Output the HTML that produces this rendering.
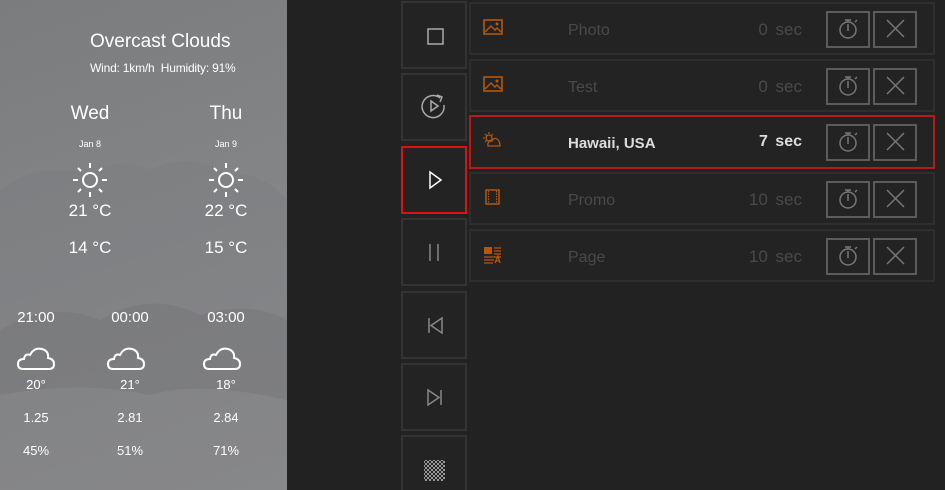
<!DOCTYPE html>
<html><head><style>
*{margin:0;padding:0;box-sizing:border-box}
html,body{width:945px;height:490px;overflow:hidden}
body{background:#222;position:relative;font-family:"Liberation Sans",sans-serif}
.left{position:absolute;left:0;top:0;width:287px;height:490px;background:linear-gradient(160deg,#7a7c7e 0%,#838587 50%,#8e8f90 100%);color:#fff}
.t{position:absolute;text-align:center;white-space:nowrap}
.btn{position:absolute;left:401px;width:66px;height:68px;border:2px solid #333;background:#232323}
.row{position:absolute;left:469px;width:466px;height:53px;border:2px solid #2e2e2e;background:#232323}
.row .name{position:absolute;left:97px;top:18px;font-size:16px;color:#4a4a4a}
.row .sec{position:absolute;right:131px;top:16px;font-size:17px;color:#4a4a4a;word-spacing:3px}
.sb{position:absolute;top:7px;width:44px;height:37px;border:2px solid #5c5c5c}
.ic{position:absolute;left:12px;top:15px}
</style></head><body>
<div class="left">
<svg width="287" height="490" style="position:absolute;left:0;top:0" viewBox="0 0 287 490">
<path d="M0 190 Q40 160 90 175 Q120 155 150 170 Q190 150 230 175 Q260 170 287 200 L287 490 L0 490Z" fill="#7a7c7e" opacity=".35"/>
<path d="M0 330 Q50 300 100 320 Q150 290 200 315 Q250 300 287 320 L287 400 Q200 380 150 395 Q80 380 0 395Z" fill="#6f7173" opacity=".35"/>
</svg>
<div class="t" style="left:90px;top:31px;font-size:19px">Overcast Clouds</div>
<div class="t" style="left:90px;top:61px;font-size:12px;letter-spacing:-0.2px">Wind: 1km/h&nbsp;&nbsp;Humidity: 91%</div>
<div class="t" style="left:60px;width:60px;top:103px;font-size:19px">Wed</div>
<div class="t" style="left:196px;width:60px;top:103px;font-size:19px">Thu</div>
<div class="t" style="left:60px;width:60px;top:139px;font-size:9px">Jan 8</div>
<div class="t" style="left:196px;width:60px;top:139px;font-size:9px">Jan 9</div>
<svg style="position:absolute;left:72px;top:162px" width="36" height="36" viewBox="0 0 36 36" stroke="#fff" stroke-width="2" fill="none"><circle cx="18" cy="18" r="7"/><path d="M18 1v5M18 30v5M1 18h5M30 18h5M6 6l3 3M27 27l3 3M30 6l-3 3M6 30l3-3"/></svg>
<svg style="position:absolute;left:208px;top:162px" width="36" height="36" viewBox="0 0 36 36" stroke="#fff" stroke-width="2" fill="none"><circle cx="18" cy="18" r="7"/><path d="M18 1v5M18 30v5M1 18h5M30 18h5M6 6l3 3M27 27l3 3M30 6l-3 3M6 30l3-3"/></svg>
<div class="t" style="left:55px;width:70px;top:201px;font-size:17px">21 °C</div>
<div class="t" style="left:191px;width:70px;top:201px;font-size:17px">22 °C</div>
<div class="t" style="left:55px;width:70px;top:238px;font-size:17px">14 °C</div>
<div class="t" style="left:191px;width:70px;top:238px;font-size:17px">15 °C</div>
<div class="t" style="left:6px;width:60px;top:309px;font-size:15px">21:00</div>
<div class="t" style="left:100px;width:60px;top:309px;font-size:15px">00:00</div>
<div class="t" style="left:196px;width:60px;top:309px;font-size:15px">03:00</div>
<svg style="position:absolute;left:17px;top:345px" width="38" height="26" viewBox="0 0 38 26"><path d="M6 24 Q1 24 1 19 Q1 14 7 14 Q8 8 13 10 Q17 2 25 4 Q32 6 31 13 Q37 14 37 19 Q37 24 32 24Z" fill="none" stroke="#fff" stroke-width="2"/></svg>
<svg style="position:absolute;left:107px;top:345px" width="38" height="26" viewBox="0 0 38 26"><path d="M6 24 Q1 24 1 19 Q1 14 7 14 Q8 8 13 10 Q17 2 25 4 Q32 6 31 13 Q37 14 37 19 Q37 24 32 24Z" fill="none" stroke="#fff" stroke-width="2"/></svg>
<svg style="position:absolute;left:203px;top:345px" width="38" height="26" viewBox="0 0 38 26"><path d="M6 24 Q1 24 1 19 Q1 14 7 14 Q8 8 13 10 Q17 2 25 4 Q32 6 31 13 Q37 14 37 19 Q37 24 32 24Z" fill="none" stroke="#fff" stroke-width="2"/></svg>
<div class="t" style="left:6px;width:60px;top:377px;font-size:13px">20°</div>
<div class="t" style="left:100px;width:60px;top:377px;font-size:13px">21°</div>
<div class="t" style="left:196px;width:60px;top:377px;font-size:13px">18°</div>
<div class="t" style="left:6px;width:60px;top:410px;font-size:13px">1.25</div>
<div class="t" style="left:100px;width:60px;top:410px;font-size:13px">2.81</div>
<div class="t" style="left:196px;width:60px;top:410px;font-size:13px">2.84</div>
<div class="t" style="left:6px;width:60px;top:443px;font-size:13px">45%</div>
<div class="t" style="left:100px;width:60px;top:443px;font-size:13px">51%</div>
<div class="t" style="left:196px;width:60px;top:443px;font-size:13px">71%</div>
</div>

<div class="btn" style="top:1px"><svg width="62" height="64" viewBox="0 0 62 64"><rect x="25" y="26" width="15" height="15" fill="none" stroke="#aaa" stroke-width="1.5"/></svg></div>
<div class="btn" style="top:73px"><svg width="62" height="64" viewBox="0 0 62 64"><path d="M41 30 A11 11 0 1 1 37 23" fill="none" stroke="#aaa" stroke-width="1.5"/><path d="M34 20 L39 22 L37 27" fill="none" stroke="#aaa" stroke-width="1.5"/><path d="M28 26 L35 31 L28 36Z" fill="none" stroke="#aaa" stroke-width="1.5"/></svg></div>
<div class="btn" style="top:146px;border-color:#d11"><svg width="62" height="64" viewBox="0 0 62 64"><path d="M27 24 L38 32 L27 40Z" fill="none" stroke="#fff" stroke-width="1.5"/></svg></div>
<div class="btn" style="top:218px"><svg width="62" height="64" viewBox="0 0 62 64"><path d="M27 24v17M35 24v17" stroke="#888" stroke-width="1.5"/></svg></div>
<div class="btn" style="top:291px"><svg width="62" height="64" viewBox="0 0 62 64"><path d="M26 25v15M39 25 L28 32.5 L39 40Z" fill="none" stroke="#888" stroke-width="1.5"/></svg></div>
<div class="btn" style="top:363px"><svg width="62" height="64" viewBox="0 0 62 64"><path d="M38 25v15M25 25 L36 32.5 L25 40Z" fill="none" stroke="#888" stroke-width="1.5"/></svg></div>
<div class="btn" style="top:435px"><svg width="62" height="64" viewBox="0 0 62 64"><defs><pattern id="ck" width="4" height="4" patternUnits="userSpaceOnUse"><rect width="2" height="2" fill="#999"/><rect x="2" y="2" width="2" height="2" fill="#999"/></pattern></defs><rect x="21" y="23" width="21" height="21" fill="url(#ck)"/></svg></div>

<div class="row" style="top:2px"><svg class="ic" width="20" height="16" viewBox="0 0 20 16"><rect x="1" y="1" width="18" height="14" fill="none" stroke="#b5560c" stroke-width="1.6"/><path d="M2 13 L8 7 L12 11 L14 9 L18 13" fill="none" stroke="#b5560c" stroke-width="1.5"/><circle cx="14" cy="5" r="1.5" fill="#b5560c"/></svg><div class="name">Photo</div><div class="sec">0 sec</div>
<div class="sb" style="left:355px"></div><div class="sb" style="left:402px"></div></div>
<div class="row" style="top:59px"><svg class="ic" width="20" height="16" viewBox="0 0 20 16"><rect x="1" y="1" width="18" height="14" fill="none" stroke="#b5560c" stroke-width="1.6"/><path d="M2 13 L8 7 L12 11 L14 9 L18 13" fill="none" stroke="#b5560c" stroke-width="1.5"/><circle cx="14" cy="5" r="1.5" fill="#b5560c"/></svg><div class="name">Test</div><div class="sec">0 sec</div>
<div class="sb" style="left:355px"></div><div class="sb" style="left:402px"></div></div>
<div class="row" style="top:115px;border-color:#b41c1c;height:54px"><svg class="ic" width="20" height="16" viewBox="0 0 20 16"><circle cx="6" cy="6" r="3" fill="none" stroke="#b5560c" stroke-width="1.3"/><path d="M6 0v2M0 6h2M2 2l1.5 1.5M10 2l-1.5 1.5M2 10l1.5-1.5" stroke="#b5560c" stroke-width="1.2"/><path d="M5 14 Q4 9 9 9 Q11 5 14 7 Q17 9 17 14Z" fill="#232323" stroke="#b5560c" stroke-width="1.3"/></svg><div class="name" style="color:#ddd;font-weight:bold;font-size:15px">Hawaii, USA</div><div class="sec" style="color:#ddd;font-weight:bold;font-size:16px">7 sec</div>
<div class="sb" style="left:355px"></div><div class="sb" style="left:402px"></div></div>
<div class="row" style="top:172px"><svg class="ic" width="20" height="16" viewBox="0 0 20 16"><rect x="3" y="1" width="13" height="14" fill="none" stroke="#b5560c" stroke-width="1.5"/><path d="M5.5 2v12M13.5 2v12" stroke="#b5560c" stroke-width="1" stroke-dasharray="1.5 1"/></svg><div class="name">Promo</div><div class="sec">10 sec</div>
<div class="sb" style="left:355px"></div><div class="sb" style="left:402px"></div></div>
<div class="row" style="top:229px"><svg class="ic" width="20" height="18" viewBox="0 0 20 18"><rect x="1" y="1" width="8" height="7" fill="#b5560c"/><path d="M11 2h7M11 5h7M11 8h7M1 11h17M1 14h10M1 17h9" stroke="#b5560c" stroke-width="1.3"/><path d="M12 17 L15 10 L17 17M13 15h3" stroke="#b5560c" stroke-width="1.3" fill="none"/></svg><div class="name">Page</div><div class="sec">10 sec</div>
<div class="sb" style="left:355px"></div><div class="sb" style="left:402px"></div></div>

<svg style="position:absolute;left:0;top:0" width="945" height="490">
<g fill="none" stroke="#777" stroke-width="1.5">
<g id="tm"><circle cx="848" cy="30" r="8"/><path d="M848 24v7M845 20h6M848 20v2M855 22l2 -2"/></g>
<use href="#tm" y="57"/><use href="#tm" y="113"/><use href="#tm" y="170"/><use href="#tm" y="227"/>
<g id="xx"><path d="M887 20 L904 37 M904 20 L887 37"/></g>
<use href="#xx" y="57"/><use href="#xx" y="113"/><use href="#xx" y="170"/><use href="#xx" y="227"/>
</g></svg>
</body></html>
